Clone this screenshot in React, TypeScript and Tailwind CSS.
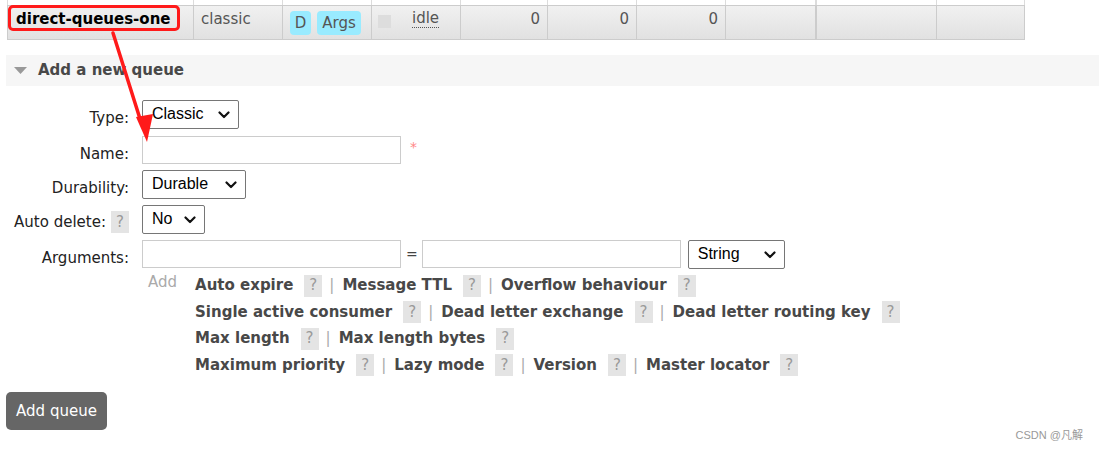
import React from "react";

const F = { fontFamily: '"DejaVu Sans", Verdana, sans-serif' };
const A = { fontFamily: '"Liberation Sans", Arial, sans-serif' };

function Chevron() {
  return (
    <svg width="12" height="8" viewBox="0 0 12 8" className="shrink-0">
      <path d="M1.5 1.5 L6 6 L10.5 1.5" fill="none" stroke="#111" strokeWidth="2.2" strokeLinecap="round" strokeLinejoin="round" />
    </svg>
  );
}

function Select({ label, w }: { label: string; w: string }) {
  return (
    <div
      className={`${w} h-[29px] border border-[#767676] rounded-[2px] bg-white flex items-center justify-between pl-[9px] pr-[8px] text-[16px] text-black`}
      style={A}
    >
      <span className="leading-none pb-[2px]">{label}</span>
      <Chevron />
    </div>
  );
}

function Input({ w = "w-[259px]" }: { w?: string }) {
  return <div className={`${w} h-[28px] border border-[#cccccc] bg-white`} />;
}

function Help() {
  return (
    <span className="inline-flex items-center justify-center w-[18px] h-[22px] bg-[#e4e4e4] text-[#999] text-[15px] leading-none">
      ?
    </span>
  );
}

function Link({ t, last }: { t: string; last?: boolean }) {
  return (
    <span className="inline-flex items-center">
      <span className="font-bold text-[#484848]">{t}</span>
      <span className="ml-[11px]"><Help /></span>
      {!last && <span className="ml-[7px] mr-[8px] text-[#aaa] font-normal">|</span>}
    </span>
  );
}

const cols = [186, 89, 89, 89, 87, 89, 89, 91, 120, 88];

export default function App() {
  return (
    <div className="relative w-[1099px] h-[451px] bg-white overflow-hidden text-[15px] text-[#222]" style={F}>
      {/* table tail row */}
      <div className="ml-[7px] w-[1018px]">
        <div className="flex h-[5px] border-l border-[#dcdcdc]">
          {cols.map((w, i) => (
            <div key={i} className={`h-full border-r border-[#dcdcdc] ${i === 7 ? "border-r-2" : ""}`} style={{ width: w }} />
          ))}
        </div>
        <div className="flex h-[35px] border-t border-b border-l border-[#cccccc] bg-linear-to-b from-[#f1f1f1] to-[#e1e1e1]">
          <div className="relative w-[186px] border-r border-[#cccccc] flex items-center pl-[8px] pb-[7px]">
            <span className="font-bold text-black">direct-queues-one</span>
            <span className="absolute left-0 top-[-1px] w-[172px] h-[26px] border-[3px] border-[#ff1a1a] rounded-[5px]" />
          </div>
          <div className="w-[89px] border-r border-[#cccccc] flex items-center pl-[7px] pb-[7px] text-[#555]">classic</div>
          <div className="w-[89px] border-r border-[#cccccc] flex items-center pl-[7px] gap-[6px] pt-[1px] text-[#555]">
            <span className="h-[24px] w-[21px] rounded-[4px] bg-[#99ebff] flex items-center justify-center">D</span>
            <span className="h-[24px] w-[44px] rounded-[4px] bg-[#99ebff] flex items-center justify-center">Args</span>
          </div>
          <div className="w-[89px] border-r border-[#cccccc] flex items-center pl-[6px] pb-[7px] text-[#555]">
            <span className="w-[13px] h-[13px] bg-[#dddddd] mt-[4px]" />
            <span className="ml-[21px] border-b border-dotted border-[#555] leading-[17px]">idle</span>
          </div>
          <div className="w-[87px] border-r border-[#cccccc] flex items-center justify-end pr-[7px] pb-[7px] text-[#555]">0</div>
          <div className="w-[89px] border-r border-[#cccccc] flex items-center justify-end pr-[7px] pb-[7px] text-[#555]">0</div>
          <div className="w-[89px] border-r border-[#cccccc] flex items-center justify-end pr-[7px] pb-[7px] text-[#555]">0</div>
          <div className="w-[91px] border-r-2 border-[#cccccc]" />
          <div className="w-[120px] border-r border-[#cccccc]" />
          <div className="w-[88px] border-r border-[#cccccc]" />
        </div>
      </div>

      {/* section header */}
      <div className="ml-[6px] mt-[15px] h-[31px] bg-[#f6f6f6] flex items-center pl-[8px]">
        <svg width="13" height="8" viewBox="0 0 13 8" className="mr-[11px]">
          <path d="M0 0 L13 0 L6.5 7 Z" fill="#999" />
        </svg>
        <span className="font-bold text-[#484848]">Add a new queue</span>
      </div>

      {/* form */}
      <div className="mt-[14px] flex flex-col">
        <div className="flex items-start h-[36px]">
          <div className="w-[129px] text-right pt-[8px] leading-[20px]">Type:</div>
          <div className="ml-[13px]"><Select label="Classic" w="w-[97px]" /></div>
        </div>
        <div className="flex items-start h-[34px]">
          <div className="w-[129px] text-right pt-[8px] leading-[20px]">Name:</div>
          <div className="ml-[13px] flex items-start">
            <Input />
            <span className="ml-[9px] text-[#f88] text-[14px] pt-[1px]">*</span>
          </div>
        </div>
        <div className="flex items-start h-[35px]">
          <div className="w-[129px] text-right pt-[8px] leading-[20px]">Durability:</div>
          <div className="ml-[13px]"><Select label="Durable" w="w-[104px]" /></div>
        </div>
        <div className="flex items-start h-[35px]">
          <div className="w-[129px] flex justify-end items-center gap-[5px] pt-[6px]">
            <span>Auto delete:</span>
            <Help />
          </div>
          <div className="ml-[13px]"><Select label="No" w="w-[63px]" /></div>
        </div>
        <div className="flex items-start h-[30px]">
          <div className="w-[129px] text-right pt-[8px] leading-[20px]">Arguments:</div>
          <div className="ml-[13px] flex items-start">
            <Input />
            <span className="ml-[5px] mr-[4px] pt-[4px] text-[14px] text-[#444]">=</span>
            <Input />
            <div className="ml-[7px]"><Select label="String" w="w-[97px]" /></div>
          </div>
        </div>
      </div>

      {/* argument shortcuts */}
      <div className="flex mt-[4px] ml-[148px]">
        <span className="text-[#aaa] mt-[-3px]">Add</span>
        <div className="ml-[18px] flex flex-col gap-[4px]">
          <div className="flex"><Link t="Auto expire" /><Link t="Message TTL" /><Link t="Overflow behaviour" last /></div>
          <div className="flex"><Link t="Single active consumer" /><Link t="Dead letter exchange" /><Link t="Dead letter routing key" last /></div>
          <div className="flex"><Link t="Max length" /><Link t="Max length bytes" last /></div>
          <div className="flex"><Link t="Maximum priority" /><Link t="Lazy mode" /><Link t="Version" /><Link t="Master locator" last /></div>
        </div>
      </div>

      <button className="ml-[6px] mt-[16px] w-[101px] h-[38px] rounded-[5px] bg-[#666] text-white text-[15px]" style={F}>
        Add queue
      </button>

      <div
        className="absolute right-[16px] bottom-[8px] text-[11px] text-[#999]"
        style={{ fontFamily: '"Liberation Sans", "Noto Sans CJK SC", sans-serif' }}
      >
        CSDN @凡解
      </div>

      {/* annotation arrow */}
      <svg className="absolute left-0 top-0 pointer-events-none" width="1099" height="451">
        <line x1="113" y1="33" x2="141" y2="122" stroke="#ff1a1a" strokeWidth="3.5" strokeLinecap="round" />
        <path d="M136 117 L153 114 L147 142 Z" fill="#ff1a1a" />
      </svg>
    </div>
  );
}
